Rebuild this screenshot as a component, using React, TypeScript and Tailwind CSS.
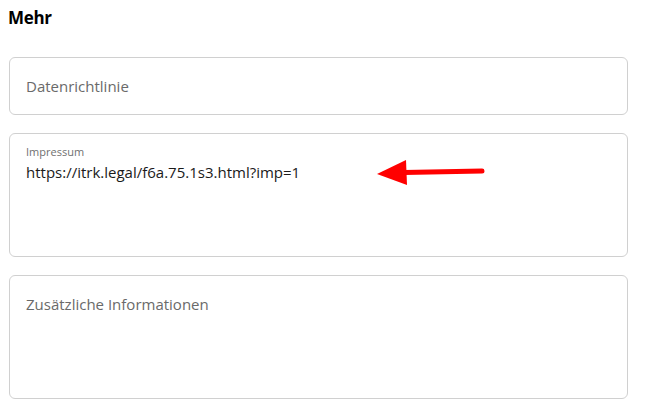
import React from "react";

export default function App() {
  return (
    <div
      className="relative w-[646px] h-[418px] bg-white overflow-hidden"
      style={{ fontFamily: '"Open Sans", "Noto Sans", Arial, sans-serif' }}
    >
      <div className="flex flex-col pl-[9px] pt-[7px]">
        <h2 className="text-[17px] leading-[22px] font-bold text-black -ml-[1px] tracking-[-0.3px]">Mehr</h2>
        <div className="mt-[28px] flex flex-col gap-[18px] w-[619px]">
          <div className="h-[58px] border border-[#d0d0d0] rounded-[6px] flex items-center pl-[16px]">
            <span className="text-[15px] text-[#6a6a6a]">Datenrichtlinie</span>
          </div>
          <div className="h-[124px] border border-[#d0d0d0] rounded-[6px] flex flex-col pl-[16px] pt-[11px]">
            <span className="text-[11px] leading-[14px] text-[#707070]">Impressum</span>
            <span className="text-[15px] leading-[20px] mt-[3px] text-[#1a1a1a]">
              https://itrk.legal/f6a.75.1s3.html?imp=1
            </span>
          </div>
          <div className="h-[124px] border border-[#d0d0d0] rounded-[6px] flex flex-col pl-[16px] pt-[18px]">
            <span className="text-[15px] leading-[20px] text-[#6a6a6a]">Zusätzliche Informationen</span>
          </div>
        </div>
      </div>
      <svg
        className="absolute left-[370px] top-[150px]"
        width="120"
        height="45"
        viewBox="0 0 120 45"
      >
        <line x1="34" y1="22.5" x2="112" y2="21" stroke="#ff0000" strokeWidth="5" strokeLinecap="round" />
        <polygon points="7,24 36,10 37,35" fill="#ff0000" />
      </svg>
    </div>
  );
}
